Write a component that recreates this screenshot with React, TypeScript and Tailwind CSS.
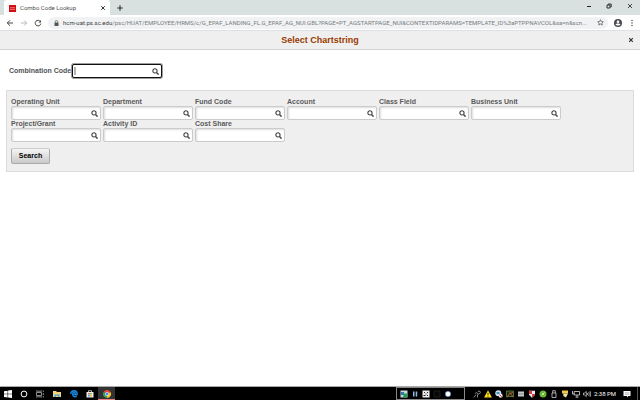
import { useState } from 'react';
import type { ReactNode } from 'react';
import clsx from 'clsx';

const URL_HOST = 'hcm-uat.ps.sc.edu';
const URL_PATH =
  '/psc/HUAT/EMPLOYEE/HRMS/c/G_EPAF_LANDING_FL.G_EPAF_AG_NUI.GBL?PAGE=PT_AGSTARTPAGE_NUI&CONTEXTIDPARAMS=TEMPLATE_ID%3aPTPPNAVCOL&sa=n&scn...';

const FIELDS = [
  { id: 'operating-unit', label: 'Operating Unit' },
  { id: 'department', label: 'Department' },
  { id: 'fund-code', label: 'Fund Code' },
  { id: 'account', label: 'Account' },
  { id: 'class-field', label: 'Class Field' },
  { id: 'business-unit', label: 'Business Unit' },
  { id: 'project-grant', label: 'Project/Grant' },
  { id: 'activity-id', label: 'Activity ID' },
  { id: 'cost-share', label: 'Cost Share' },
];

interface IconButtonProps {
  label: string;
  className?: string;
  children: ReactNode;
}

function IconButton({ label, className, children }: IconButtonProps) {
  return (
    <button type="button" aria-label={label} className={clsx('flex shrink-0 items-center justify-center', className)}>
      {children}
    </button>
  );
}

function SearchIcon() {
  return (
    <svg viewBox="0 0 8 8" className="size-[7px]" fill="none" stroke="#444" strokeWidth="1.3">
      <circle cx="3.4" cy="3.3" r="2.4" />
      <path d="M5.1 5.1 7.5 7.5" strokeWidth="1.7" />
    </svg>
  );
}

function LookupInput({ id, focused }: { id: string; focused?: boolean }) {
  const [value, setValue] = useState('');

  return (
    <div
      className={clsx(
        'flex h-[14px] w-[90px] items-center rounded-[2px] border bg-white pr-[2px]',
        focused ? 'border-[#101010] ring-1 ring-[#101010]/40' : 'border-[#cbcbcb] shadow-[inset_1px_1px_2px_#ddd]'
      )}
    >
      {focused && <span className="ml-px h-2 w-[2px] bg-[#b5b5b5]" />}
      <input
        id={id}
        value={value}
        onChange={(e) => setValue(e.target.value)}
        className="h-full min-w-0 flex-1 bg-transparent px-1 text-[7px] outline-none"
      />
      <IconButton label="Look up" className="size-2">
        <SearchIcon />
      </IconButton>
    </div>
  );
}

function TabBar() {
  return (
    <div className="flex h-[15px] items-stretch bg-[#d8e1df] pl-1">
      <div className="flex w-[106px] items-center rounded-t-[3px] bg-white pl-[5px] pr-1 pt-px">
        <svg viewBox="0 0 7 7" className="size-[7px]">
          <path d="M0 0h7v7H0z" fill="#d60c13" />
          <path d="M1 2.7h5M1 4.4h5" stroke="#f3a3a3" strokeWidth=".7" />
        </svg>
        <span className="ml-1 flex-1 whitespace-nowrap text-[6px] leading-2 text-[#4d5053]">Combo Code Lookup</span>
        <IconButton label="Close tab" className="size-[6px]">
          <svg viewBox="0 0 6 6" className="size-[6px]" stroke="#333" strokeWidth="1">
            <path d="m1.2 1.2 3.6 3.6m0-3.6L1.2 4.8" />
          </svg>
        </IconButton>
      </div>
      <IconButton label="New tab" className="ml-[6px] w-2">
        <svg viewBox="0 0 8 8" className="size-2" stroke="#333" strokeWidth="1.1">
          <path d="M4 1.2v5.6M1.2 4h5.6" />
        </svg>
      </IconButton>
      <div className="ml-auto flex h-3 items-center">
        <IconButton label="Minimize" className="w-5">
          <svg viewBox="0 0 6 6" className="size-[6px]" stroke="#222" strokeWidth="1">
            <path d="M1 3.5h4" />
          </svg>
        </IconButton>
        <IconButton label="Restore" className="w-5">
          <svg viewBox="0 0 6 6" className="size-[6px]" fill="none" stroke="#222" strokeWidth=".9">
            <path d="M1 2h3v3H1zM2.2 1.7V1h3v3h-.8" />
          </svg>
        </IconButton>
        <IconButton label="Close" className="w-[21px]">
          <svg viewBox="0 0 6 6" className="size-[6px]" stroke="#222" strokeWidth=".8">
            <path d="m1 1 4 4m0-4L1 5" />
          </svg>
        </IconButton>
      </div>
    </div>
  );
}

function AddressBar() {
  return (
    <div className="flex h-4 items-center border-b border-[#dcdfe3] bg-white pl-[3px] pr-1">
      <IconButton label="Back" className="w-[14px]">
        <svg viewBox="0 0 8 8" className="size-2" fill="none" stroke="#444" strokeWidth="1">
          <path d="M7 4H1.3M4 1.3 1.3 4 4 6.7" />
        </svg>
      </IconButton>
      <IconButton label="Forward" className="w-[14px]">
        <svg viewBox="0 0 8 8" className="size-2" fill="none" stroke="#b0b3b6" strokeWidth=".9">
          <path d="M1 4h5.7M4 1.3 6.7 4 4 6.7" />
        </svg>
      </IconButton>
      <IconButton label="Reload" className="w-[14px]">
        <svg viewBox="0 0 8 8" className="size-2" fill="none" stroke="#444" strokeWidth="1">
          <path d="M6.4 2.6A2.8 2.8 0 1 0 6.8 4.6" />
          <path d="M7 1v2.6H4.4z" fill="#444" stroke="none" />
        </svg>
      </IconButton>
      <div className="ml-[3px] flex h-3 min-w-0 flex-1 items-center rounded-full bg-[#f0f2f3] pl-[6px] pr-1">
        <svg viewBox="0 0 5 6" className="h-[6px] w-[5px] shrink-0">
          <path d="M.5 2.5h4V6h-4z" fill="#555" />
          <path d="M1.4 2.6V1.5a1.1 1.1 0 0 1 2.2 0v1.1" fill="none" stroke="#555" strokeWidth=".7" />
        </svg>
        <span className="ml-1 mr-[6px] flex-1 whitespace-nowrap text-[6px] leading-[10px] text-[#777b80]">
          <span className="text-[#3c4043]">{URL_HOST}</span>
          {URL_PATH}
        </span>
        <IconButton label="Bookmark" className="size-2">
          <svg viewBox="0 0 8 8" className="size-[7px]" fill="none" stroke="#555" strokeWidth=".8">
            <path d="m4 .8.9 2.1 2.3.2-1.7 1.5.5 2.3L4 5.7 2 6.9l.5-2.3L.8 3.1l2.3-.2z" />
          </svg>
        </IconButton>
      </div>
      <IconButton label="Profile" className="ml-[6px] size-2">
        <svg viewBox="0 0 8 8" className="size-2">
          <circle cx="4" cy="4" r="4" fill="#484b4f" />
          <circle cx="4" cy="2.8" r="1.3" fill="#fff" />
          <path d="M1.6 5.5c.6-1.2 4.2-1.2 4.8 0-.7 1.3-4.1 1.3-4.8 0z" fill="#fff" />
        </svg>
      </IconButton>
      <IconButton label="Menu" className="ml-[6px] size-2">
        <svg viewBox="0 0 8 8" className="size-2" fill="#444">
          <circle cx="4" cy="1.5" r=".7" />
          <circle cx="4" cy="4" r=".7" />
          <circle cx="4" cy="6.5" r=".7" />
        </svg>
      </IconButton>
    </div>
  );
}

function LookupForm() {
  return (
    <main className="flex-1 px-[6px] pt-[14px] font-['Liberation_Sans',Arial,sans-serif] text-[7px] font-bold text-[#5a5a5a]">
      <div className="flex items-center gap-1 pl-[3px]">
        <label htmlFor="combination-code" className="w-[59px] whitespace-nowrap text-[#4f5358]">
          Combination Code
        </label>
        <LookupInput id="combination-code" focused />
      </div>

      <form className="mt-3 border border-[#dcdcdc] bg-[#efefef] pb-[7px] pl-1 pt-[7px]" onSubmit={(e) => e.preventDefault()}>
        <div className="grid grid-cols-[repeat(6,92px)]">
          {FIELDS.map((field) => (
            <div key={field.id}>
              <label htmlFor={field.id} className="block h-2 whitespace-nowrap leading-2">
                {field.label}
              </label>
              <LookupInput id={field.id} />
            </div>
          ))}
        </div>
        <button
          type="submit"
          className="mt-[6px] block h-4 w-[39px] rounded-[2px] border border-[#aaa] border-t-[#ccc] bg-linear-to-b from-[#f5f5f5] to-[#c9c9c9] text-black"
        >
          Search
        </button>
      </form>
    </main>
  );
}

interface TaskIcon {
  label: string;
  art: ReactNode;
  active?: boolean;
}

const PINNED: TaskIcon[] = [
  { label: 'Start', art: <path d="M0 1.2 3.6.7v3.1H0zM4.1.6 8 0v3.8H4.1zM0 4.3h3.6v3.1L0 6.9zM4.1 4.3H8V8l-3.9-.5z" fill="#fff" /> },
  { label: 'Cortana', art: <circle cx="4" cy="4" r="2.9" fill="none" stroke="#fff" /> },
  {
    label: 'Task view',
    art: <path d="M.5 2.5h5v3h-5zM.5.5v.7h5V.5M.5 7.5v-.7h5v.7M7.3.5V2M7.3 3v2M7.3 6v1.5" fill="none" stroke="#ccc" strokeWidth=".7" />,
  },
  {
    label: 'File Explorer',
    art: (
      <>
        <path d="M0 1h3l1 1h4v5H0z" fill="#f6d477" />
        <path d="M1.5 4.5h5V7H5.2V5.8H2.8V7H1.5z" fill="#3f9fdb" />
      </>
    ),
  },
  {
    label: 'Edge',
    art: <path d="M.7 4C.9 1.6 2.3.8 4 .8c2 0 3.200 1.300 3.200 3.700H2.700c0 2.400 2.300 2.800 4.100 1.700M2.700 3.700c.2-2 2.500-2 2.700 0" fill="none" stroke="#1683d8" strokeWidth="1.4" />,
  },
  {
    label: 'Store',
    art: (
      <>
        <path d="M2.5 2V.7h3V2" fill="none" stroke="#eee" strokeWidth=".7" />
        <path d="M.5 2h7v5.500h-7z" fill="#eee" />
        <path d="M2.2 3h1.500v1.500H2.200z" fill="#e64a2e" />
        <path d="M4.2 3h1.500v1.500H4.200z" fill="#6da82d" />
        <path d="M2.2 5h1.500v1.500H2.200z" fill="#2b8fd0" />
        <path d="M4.2 5h1.500v1.500H4.200z" fill="#f2b21d" />
      </>
    ),
  },
  {
    label: 'Chrome',
    active: true,
    art: (
      <>
        <path d="M4 4 .5 2a4 4 0 0 1 7 0z" fill="#e94435" />
        <path d="M4 4 7.500 2A4 4 0 0 1 4 8z" fill="#fbc116" />
        <path d="M4 4v4A4 4 0 0 1 .5 2z" fill="#34a353" />
        <circle cx="4" cy="4" r="1.9" fill="#fff" />
        <circle cx="4" cy="4" r="1.4" fill="#4285f4" />
      </>
    ),
  },
];

const RECORDER: TaskIcon[] = [
  {
    label: 'Capture',
    art: (
      <>
        <path d="M.5.5h7v7h-7z" fill="#cbd8df" />
        <path d="M1 2h3v3H1z" fill="#3278a8" />
        <path d="M4 3.500h3v3.500H3z" fill="#16a34a" />
      </>
    ),
  },
  { label: 'Pause', art: <path d="M2 1.500h1.500v5H2zM4.700 1.500h1.500v5H4.700z" fill="#8bbce8" /> },
  {
    label: 'Pointer',
    art: (
      <>
        <path d="M.5.5h7v7h-7z" fill="#eee" />
        <path d="M2 2h1v1H2zM5 2h1v1H5zM3.500 3.500h1v1h-1zM1.500 5h2v1h-2zM5 5h1v1H5z" fill="#222" />
      </>
    ),
  },
  { label: 'Stop', art: <path d="M1 1h6v6H1z" fill="#080808" stroke="#252525" strokeWidth=".7" /> },
  { label: 'Record', art: <circle cx="4" cy="4" r="2.7" fill="#fff" stroke="#4e79c5" strokeWidth=".6" /> },
];

const TRAY: TaskIcon[] = [
  { label: 'Show people', art: <path d="M.8 7.500 3 4.700m1.500 2.800V5L6.800 3M2.200 3.700a1.300 1.300 0 1 1 2.500.7M5 2a1.300 1.300 0 1 1 2 1.500" fill="none" stroke="#aaa" strokeWidth=".8" /> },
  {
    label: 'Warning',
    art: (
      <>
        <path d="M4 .3 7.900 7.600H.1z" fill="#ffe01b" />
        <path d="M4 2.800v2.400M4 6v.8" stroke="#222" strokeWidth=".9" />
      </>
    ),
  },
  {
    label: 'Sync',
    art: (
      <>
        <circle cx="3.3" cy="3.3" r="3" fill="#c9e2ee" />
        <path d="M1.500 2h3v2h-3z" fill="#4593bd" />
        <circle cx="5.7" cy="5.7" r="2" fill="#e9e9e9" />
        <path d="m4.500 4.500 2.300 2.300" stroke="#d33" />
      </>
    ),
  },
  {
    label: 'Graphics',
    art: (
      <>
        <path d="M.5 1h7v5.500h-7z" fill="#172b16" stroke="#68843b" strokeWidth=".8" />
        <path d="m1 7.500 3-5 3.300 5M4 4l3-2" fill="none" stroke="#c26a32" strokeWidth=".8" />
      </>
    ),
  },
  {
    label: 'Drive',
    art: (
      <>
        <path d="M1 1.500h6v5H1z" fill="#c5c8ca" />
        <path d="M1 4h6" stroke="#666" strokeWidth=".7" />
      </>
    ),
  },
  {
    label: 'Security',
    art: (
      <>
        <path d="M1 .7h6v4L4 7.700l-3-3z" fill="#eee" />
        <path d="M1 .7h3V4H1zM4 4h3v.7l-3 3z" fill="#d83c40" />
      </>
    ),
  },
  {
    label: 'Update',
    art: (
      <>
        <circle cx="4" cy="4" r="3.5" fill="#68b52f" />
        <path d="M2.500 5.500 5.500 2.500M3 3l2 2" stroke="#d8f0ca" strokeWidth=".8" />
      </>
    ),
  },
  { label: 'USB', art: <path d="M2 3h4v4.500H2zM2.700 3V.7h2.600V3" fill="none" stroke="#ccc" strokeWidth=".8" /> },
  {
    label: 'Alerts',
    art: (
      <>
        <path d="M1 .5h6v3H1z" fill="#f4c846" />
        <path d="M2.300 3.500H7L5 7.600 2.300 6z" fill="#e8e5aa" />
      </>
    ),
  },
  { label: 'Network', art: <path d="M2.200 1.500h5.300V5H2.200zM5 5v2M3.500 7.200h3M.5 1v3h1.700" fill="none" stroke="#ddd" strokeWidth=".8" /> },
  { label: 'Volume', art: <path d="M.5 3h1l1.800-1.500v5L1.500 5h-1zM4.500 3v2M5.700 2q1.200 2 0 4M7 1q1.600 3 0 6" fill="none" stroke="#ddd" strokeWidth=".7" /> },
];

function TaskButton({ icon, className }: { icon: TaskIcon; className?: string }) {
  return (
    <IconButton
      label={icon.label}
      className={clsx('h-full', className, icon.active && 'bg-[#333] shadow-[inset_0_-1px_0_#e88080]')}
    >
      <svg viewBox="0 0 8 8" className="size-2">
        {icon.art}
      </svg>
    </IconButton>
  );
}

function Taskbar() {
  return (
    <footer className="flex h-[14px] items-stretch border-t border-[#aaa] bg-black">
      <div className="grid grid-cols-[16px_16px_16px_17px_17px_16px_17px]">
        {PINNED.map((icon) => (
          <TaskButton key={icon.label} icon={icon} />
        ))}
      </div>
      <div className="ml-auto flex items-stretch">
        <div className="flex w-[69px] border border-[#888] pl-px">
          {RECORDER.map((icon) => (
            <TaskButton key={icon.label} icon={icon} className="w-[11px]" />
          ))}
        </div>
        <div className="ml-[6px] flex">
          {TRAY.map((icon) => (
            <TaskButton key={icon.label} icon={icon} className="w-[11px]" />
          ))}
        </div>
        <span className="ml-[2px] w-[21px] self-center whitespace-nowrap text-[6px] text-white">2:38 PM</span>
        <IconButton label="Notifications" className="ml-[7px] mr-[5px] w-[10px]">
          <svg viewBox="0 0 8 8" className="size-2">
            <path d="M.5 1h7v5H5.300L4 7.500V6H.5z" fill="#fff" />
            <path d="M1.700 2.800h4.600M1.700 4.300h4.600" stroke="#888" strokeWidth=".6" />
          </svg>
        </IconButton>
        <span className="mr-[2px] w-px bg-[#555]" />
      </div>
    </footer>
  );
}

export default function App() {
  return (
    <div className="flex min-h-screen flex-col bg-white font-[Roboto,'Noto_Sans',sans-serif]">
      <TabBar />
      <AddressBar />
      <header className="grid h-[19px] grid-cols-[1fr_auto_1fr] items-center border-b border-[#d3d3d3] bg-[#efefef] px-[6px]">
        <h1 className="col-start-2 font-['Liberation_Sans',Arial,sans-serif] text-[9px] font-bold leading-3 text-[#993c00]">
          Select Chartstring
        </h1>
        <IconButton label="Close dialog" className="size-[6px] justify-self-end">
          <svg viewBox="0 0 6 6" className="size-[6px]" stroke="#333" strokeWidth="1.2">
            <path d="m1.2 1.2 3.6 3.6m0-3.600L1.200 4.800" />
          </svg>
        </IconButton>
      </header>
      <LookupForm />
      <Taskbar />
    </div>
  );
}
